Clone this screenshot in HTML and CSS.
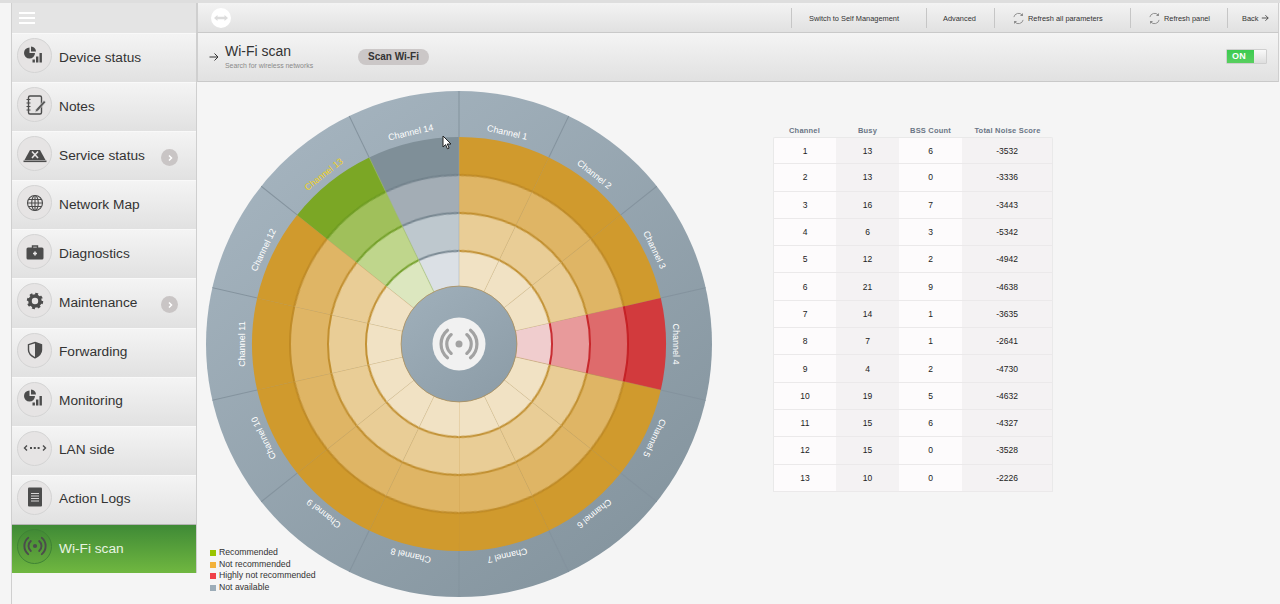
FILE: index.html
```html
<!DOCTYPE html>
<html lang="en">
<head>
<meta charset="utf-8">
<title>Wi-Fi scan</title>
<link rel="stylesheet" href="styles.css">
</head>
<body>
<svg class="defs" width="0" height="0" aria-hidden="true">
  <defs>
    <linearGradient id="slate" x1="0.15" y1="0.05" x2="0.85" y2="0.95">
      <stop offset="0" stop-color="#a5b4bf"/>
      <stop offset="1" stop-color="#84949e"/>
    </linearGradient>
    <linearGradient id="slate-hub" x1="0.15" y1="0.05" x2="0.85" y2="0.95">
      <stop offset="0" stop-color="#9eaeb9"/>
      <stop offset="1" stop-color="#8d9da8"/>
    </linearGradient>
    <symbol id="pie" viewBox="0 0 24 24">
      <path d="M6.500 3.500v5.500h5.500A5.500 5.500 0 1 1 6.500 3.500z"/>
      <path d="M8 2.500a5.400 5.400 0 0 1 5 5H8z"/>
      <rect x="9.500" y="15.500" width="2.400" height="3"/>
      <rect x="13" y="12.500" width="2.400" height="6"/>
      <rect x="16.500" y="9" width="2.400" height="9.500"/>
    </symbol>
    <symbol id="wifi" viewBox="-13 -13 26 26">
      <circle r="2.300" class="wifi-dot"/>
      <path class="wifi-arc" d="M-4.500 -5.400A7 7 0 0 0 -4.500 5.400M4.500 -5.400A7 7 0 0 1 4.500 5.400M-7.400 -8.800A11.500 11.500 0 0 0 -7.400 8.800M7.400 -8.800A11.500 11.500 0 0 1 7.400 8.800"/>
    </symbol>
    <symbol id="refresh" viewBox="0 0 14 14">
      <path class="refresh-path" d="M2 5.500A5.200 5.200 0 0 1 11 3.200M12 8.500A5.200 5.200 0 0 1 3 10.800"/>
      <path class="refresh-head" d="M11.800 1.200v3.200H8.600zM2.200 12.800V9.600h3.200z"/>
    </symbol>
    <g id="sector">
      <path class="seg s1" d="M-46.060 -201.810A207 207 0 0 1 46.060 -201.810L37.610 -164.760A169 169 0 0 0 -37.610 -164.760Z"/>
      <path class="seg s2" d="M-37.610 -164.760A169 169 0 0 1 37.610 -164.760L29.150 -127.720A131 131 0 0 0 -29.150 -127.720Z"/>
      <path class="seg s3" d="M-29.150 -127.720A131 131 0 0 1 29.150 -127.720L20.690 -90.670A93 93 0 0 0 -20.690 -90.670Z"/>
      <path class="seg s4" d="M-20.690 -90.670A93 93 0 0 1 20.690 -90.670L12.910 -56.550A58 58 0 0 0 -12.910 -56.550Z"/>
      <path class="edge" d="M-37.610 -164.760A169 169 0 0 1 37.610 -164.760M-29.150 -127.720A131 131 0 0 1 29.150 -127.720M-20.690 -90.670A93 93 0 0 1 20.690 -90.670"/>
      <path class="spoke" d="M12.910 -56.550L46.060 -201.810"/>
      <path class="tick" d="M46.060 -201.810L56.300 -246.660"/>
    </g>
  </defs>
</svg>

<div class="strip"></div>
<div class="shell">
  <div class="side-col">
    <nav class="side">
      <div class="burger"><span></span><span></span><span></span></div>
      <a class="item"><span class="disc"><svg class="ico"><use href="#pie"/></svg></span><span class="label">Device status</span></a>
      <a class="item"><span class="disc"><svg class="ico" viewBox="0 0 24 24"><rect class="line" x="5.500" y="3" width="13" height="18" rx="1.500"/><path class="line thin" d="M3.500 6.500h4M3.500 10h4M3.500 13.500h4M3.500 17h4"/><path class="pencil" d="M21 7.500l1.800 1.700-7.800 8.800-3 1.200 1-3z"/></svg></span><span class="label">Notes</span></a>
      <a class="item"><span class="disc"><svg class="ico" viewBox="0 0 24 24"><path d="M7 8h10l5.500 10h-21z"/><path class="cross" d="M9 9.500l6 6.500M15 9.500l-6 6.500"/><rect x=".5" y="18.500" width="23" height="1.600"/></svg></span><span class="label">Service status</span><span class="more"><svg viewBox="0 0 8 8" width="8" height="8"><path d="M3 1.500L5.500 4 3 6.500"/></svg></span></a>
      <a class="item"><span class="disc"><svg class="ico" viewBox="0 0 24 24"><g class="line thin"><circle cx="12" cy="12" r="7.500"/><ellipse cx="12" cy="12" rx="3.300" ry="7.500"/><path d="M12 4.500v15M4.500 12h15M5.500 8.500h13M5.500 15.500h13"/></g></svg></span><span class="label">Network Map</span></a>
      <a class="item"><span class="disc"><svg class="ico" viewBox="0 0 24 24"><path class="line" d="M9.500 8V6h5v2"/><rect x="3.500" y="7.500" width="17" height="12" rx="1.500"/><path class="cross" d="M12 11.500v4M10 13.500h4"/></svg></span><span class="label">Diagnostics</span></a>
      <a class="item"><span class="disc"><svg class="ico" viewBox="0 0 24 24"><circle class="gear-ring" cx="12" cy="12" r="5"/><circle class="gear-teeth" cx="12" cy="12" r="7"/></svg></span><span class="label">Maintenance</span><span class="more"><svg viewBox="0 0 8 8" width="8" height="8"><path d="M3 1.500L5.500 4 3 6.500"/></svg></span></a>
      <a class="item"><span class="disc"><svg class="ico" viewBox="0 0 24 24"><path class="line" d="M12 4.500l6.500 2.200v5.300c0 3.500-2.800 6-6.500 7.800-3.700-1.800-6.500-4.300-6.500-7.800V6.700z"/><path d="M12 4.500l6.500 2.200v5.300c0 3.500-2.800 6-6.500 7.800z"/></svg></span><span class="label">Forwarding</span></a>
      <a class="item"><span class="disc"><svg class="ico"><use href="#pie"/></svg></span><span class="label">Monitoring</span></a>
      <a class="item"><span class="disc"><svg class="ico" viewBox="0 0 24 24"><path class="line" d="M4 9.500L1.500 12 4 14.500M20 9.500l2.500 2.500-2.500 2.500"/><path class="dots" d="M7 12h10"/></svg></span><span class="label">LAN side</span></a>
      <a class="item"><span class="disc"><svg class="ico" viewBox="0 0 24 24"><rect x="5" y="2.500" width="14" height="19" rx="1"/><path class="cross thin" d="M8 8.500h8M8 11h8M8 13.500h8M8 16h8"/></svg></span><span class="label">Action Logs</span></a>
      <a class="item active"><span class="disc"><svg class="ico"><use href="#wifi"/></svg></span><span class="label">Wi-Fi scan</span></a>
    </nav>
  </div>

  <main class="main">
    <header class="topbar">
      <span class="logo"><svg viewBox="0 0 20 20" width="20" height="20"><circle cx="10" cy="10" r="10"/><path d="M3 10l3.500-3v1.800h7V7l3.500 3-3.500 3v-1.800h-7V13z"/></svg></span>
      <div class="actions">
        <a class="act act-self">Switch to Self Management</a>
        <a class="act act-adv">Advanced</a>
        <a class="act act-all"><svg class="refresh"><use href="#refresh"/></svg>Refresh all parameters</a>
        <a class="act act-panel"><svg class="refresh"><use href="#refresh"/></svg>Refresh panel</a>
        <a class="act act-back">Back<svg class="back-arrow" viewBox="0 0 10 10"><path d="M1 5h8M5.500 1.500L9 5 5.500 8.500"/></svg></a>
      </div>
    </header>

    <section class="head">
      <svg class="head-arrow" viewBox="0 0 10 10"><path d="M.5 5h8.500M5.500 1.500L9 5 5.500 8.500"/></svg>
      <div class="titles">
        <h1>Wi-Fi scan</h1>
        <p>Search for wireless networks</p>
      </div>
      <button class="scan" type="button">Scan Wi-Fi</button>
      <div class="toggle"><span class="on">ON</span><span class="knob"></span></div>
    </section>

    <section class="content">
      <svg class="wheel" width="506" height="506" viewBox="-253 -253 506 506">
        <circle class="band" r="253"/>
        <g class="c-orange" transform="rotate(12.857)"><use href="#sector"/><text class="ch" y="-214">Channel 1</text></g>
        <g class="c-orange" transform="rotate(38.571)"><use href="#sector"/><text class="ch" y="-214">Channel 2</text></g>
        <g class="c-orange" transform="rotate(64.286)"><use href="#sector"/><text class="ch" y="-214">Channel 3</text></g>
        <g class="c-orange" transform="rotate(115.714)"><use href="#sector"/><text class="ch" y="-214">Channel 5</text></g>
        <g class="c-orange" transform="rotate(141.429)"><use href="#sector"/><text class="ch" y="-214">Channel 6</text></g>
        <g class="c-orange" transform="rotate(167.143)"><use href="#sector"/><text class="ch" y="-214">Channel 7</text></g>
        <g class="c-orange" transform="rotate(192.857)"><use href="#sector"/><text class="ch" y="-214">Channel 8</text></g>
        <g class="c-orange" transform="rotate(218.571)"><use href="#sector"/><text class="ch" y="-214">Channel 9</text></g>
        <g class="c-orange" transform="rotate(244.286)"><use href="#sector"/><text class="ch" y="-214">Channel 10</text></g>
        <g class="c-orange" transform="rotate(270)"><use href="#sector"/><text class="ch" y="-214">Channel 11</text></g>
        <g class="c-orange" transform="rotate(295.714)"><use href="#sector"/><text class="ch" y="-214">Channel 12</text></g>
        <g class="c-grey" transform="rotate(347.143)"><use href="#sector"/><text class="ch" y="-214">Channel 14</text></g>
        <g class="c-red" transform="rotate(90)"><use href="#sector"/><text class="ch" y="-214">Channel 4</text></g>
        <g class="c-green" transform="rotate(321.429)"><use href="#sector"/><text class="ch ch-sel" y="-214">Channel 13</text></g>
        <circle class="hub" r="58"/>
        <circle class="hub-disc" r="26.500"/>
        <g class="hub-icon">
          <circle r="3.500"/>
          <path d="M-7.800 -9.400A12.200 12.200 0 0 0 -7.800 9.400M7.800 -9.400A12.200 12.200 0 0 1 7.800 9.400M-11.500 -13.800A18 18 0 0 0 -11.500 13.800M11.500 -13.800A18 18 0 0 1 11.500 13.800"/>
        </g>
      </svg>

      <ul class="legend">
        <li><i class="sw sw-green"></i>Recommended</li>
        <li><i class="sw sw-orange"></i>Not recommended</li>
        <li><i class="sw sw-red"></i>Highly not recommended</li>
        <li><i class="sw sw-grey"></i>Not available</li>
      </ul>

      <svg class="cursor" width="10" height="15" viewBox="0 0 10 15"><path d="M1 1v11l2.600-2.400 1.800 4.200 1.700-.7-1.800-4.100H9z"/></svg>

      <div class="table-wrap">
        <table>
          <thead><tr><th class="c1">Channel</th><th class="c2">Busy</th><th class="c3">BSS Count</th><th class="c4">Total Noise Score</th></tr></thead>
          <tbody>
            <tr><td>1</td><td>13</td><td>6</td><td>-3532</td></tr>
            <tr><td>2</td><td>13</td><td>0</td><td>-3336</td></tr>
            <tr><td>3</td><td>16</td><td>7</td><td>-3443</td></tr>
            <tr><td>4</td><td>6</td><td>3</td><td>-5342</td></tr>
            <tr><td>5</td><td>12</td><td>2</td><td>-4942</td></tr>
            <tr><td>6</td><td>21</td><td>9</td><td>-4638</td></tr>
            <tr><td>7</td><td>14</td><td>1</td><td>-3635</td></tr>
            <tr><td>8</td><td>7</td><td>1</td><td>-2641</td></tr>
            <tr><td>9</td><td>4</td><td>2</td><td>-4730</td></tr>
            <tr><td>10</td><td>19</td><td>5</td><td>-4632</td></tr>
            <tr><td>11</td><td>15</td><td>6</td><td>-4327</td></tr>
            <tr><td>12</td><td>15</td><td>0</td><td>-3528</td></tr>
            <tr><td>13</td><td>10</td><td>0</td><td>-2226</td></tr>
          </tbody>
        </table>
      </div>
    </section>
  </main>
</div>
</body>
</html>
```

FILE: styles.css
```css
* { box-sizing: border-box; }
html, body { margin: 0; height: 604px; overflow: hidden; }
body {
  background: #f5f5f5;
  font-family: "Liberation Sans", Arial, sans-serif;
  color: #333;
  display: flex;
  flex-direction: column;
}
.defs { position: absolute; }
.strip { height: 3px; background: #dedede; flex: none; }
.shell { display: flex; flex: 1; min-height: 0; }

/* sidebar */
.side-col { width: 197px; flex: none; padding-left: 11px; }
.side {
  border-left: 1px solid #cfcfcf;
  border-right: 1px solid #cfcfcf;
  height: 570px;
  position: relative;
}
.side::after {
  content: "";
  position: absolute;
  left: -1px;
  top: 570px;
  width: 1px;
  height: 40px;
  background: #cfcfcf;
}
.burger {
  height: 30px;
  background: #e4e4e4;
  padding: 9px 0 0 7px;
  display: flex;
  flex-direction: column;
  gap: 3px;
}
.burger span { display: block; width: 16px; height: 2px; background: #fff; }
.item {
  height: 49.100px;
  display: flex;
  align-items: center;
  background: linear-gradient(#f4f4f4, #e1e1e1);
  border-top: 1px solid #f9f9f9;
  padding-left: 5px;
  font-size: 13.700px;
  color: #333;
  position: relative;
}
.label { margin-top: -2px; }
.disc {
  width: 35px;
  height: 35px;
  border-radius: 50%;
  background: #e6e4e4;
  border: 1px solid #d4d4d4;
  display: flex;
  align-items: center;
  justify-content: center;
  flex: none;
  align-self: flex-start;
  margin: 4px 7px 0 0;
}
.ico { width: 24px; height: 24px; fill: #4c4c4c; }
.line { fill: none; stroke: #4c4c4c; stroke-width: 1.400; }
.line.thin { stroke-width: 1.100; }
.pencil { fill: #5a5a5a; stroke: #e6e4e4; stroke-width: .6; }
.cross { fill: none; stroke: #e6e4e4; stroke-width: 1.600; }
.cross.thin { stroke-width: .9; }
.dots { fill: none; stroke: #4c4c4c; stroke-width: 2; stroke-dasharray: 2 1.800; }
.gear-ring { fill: none; stroke: #4c4c4c; stroke-width: 3.600; }
.gear-teeth { fill: none; stroke: #4c4c4c; stroke-width: 2.400; stroke-dasharray: 2.800 2.700; }
.wifi-dot { fill: #4c4c4c; }
.wifi-arc { fill: none; stroke: #4c4c4c; stroke-width: 2.100; stroke-linecap: round; }
.more {
  position: absolute;
  left: 149px;
  top: 17px;
  width: 17px;
  height: 17px;
  border-radius: 50%;
  background: #c9c5c5;
  display: flex;
  align-items: center;
  justify-content: center;
}
.more path { fill: none; stroke: #fff; stroke-width: 1.500; }
.item.active {
  background: linear-gradient(#3f8a36, #70b740);
  color: #e9f4e2;
  border-top: 1px solid #b4b4b4;
}
.item.active .disc { background: rgba(0, 0, 0, .03); border-color: #3f8335; }
.item.active .wifi-dot { fill: #4a5546; }
.item.active .wifi-arc { stroke: #4a5546; }
.item.active .label { margin-top: 0; }

/* main */
.main { flex: 1; min-width: 0; display: flex; flex-direction: column; }
.topbar {
  height: 30px;
  display: flex;
  align-items: center;
  justify-content: space-between;
  background: linear-gradient(#f3f3f3, #e1e1e1);
  border-left: 1px solid #cfcfcf;
  border-right: 1px solid #cfcfcf;
  border-bottom: 1px solid #c9c9c9;
  margin-right: 1px;
  padding-left: 13px;
}
.logo { display: flex; }
.logo circle { fill: #fff; }
.logo path { fill: #dcdcdc; }
.actions { display: flex; align-items: center; height: 100%; }
.act {
  height: 20px;
  display: flex;
  align-items: center;
  font-size: 7.400px;
  color: #333;
  border-left: 1px solid #c6c6c6;
  white-space: nowrap;
  padding-top: 1px;
  margin-left: -1px;
}
.act:first-child { margin-left: 0; }
.act-self { width: 136px; padding-left: 17px; }
.act-adv { width: 69px; padding-left: 16px; }
.act-all { width: 137px; padding-left: 17px; }
.act-panel { width: 98px; padding-left: 17px; }
.act-back { width: 51px; padding-left: 14px; }
.refresh { width: 13px; height: 13px; margin-right: 3px; }
.refresh-path { fill: none; stroke: #8c8c8c; stroke-width: 1; }
.refresh-head { fill: #8c8c8c; }
.back-arrow { width: 8px; height: 8px; margin-left: 3px; }
.back-arrow path, .head-arrow path { fill: none; stroke: #333; stroke-width: 1; }

.head {
  height: 49px;
  display: flex;
  align-items: center;
  background: linear-gradient(#f4f4f4, #e1e1e1);
  border-left: 1px solid #cfcfcf;
  border-right: 1px solid #cfcfcf;
  border-bottom: 1px solid #c9c9c9;
  margin-right: 1px;
  padding-left: 11px;
}
.head-arrow { width: 10px; height: 10px; flex: none; margin: 0 6px 0 0; }
.titles { width: 133px; flex: none; margin-top: -2px; }
h1 { margin: 0; font-size: 14px; font-weight: 400; line-height: 16px; color: #333; }
.titles p { margin: 2px 0 0; font-size: 6.900px; line-height: 9px; color: #8a8a8a; white-space: nowrap; }
.scan {
  width: 71px;
  height: 16px;
  border: 0;
  padding: 0;
  border-radius: 8px;
  background: #cbc7c7;
  font: 700 10px "Liberation Sans", Arial, sans-serif;
  color: #333;
  margin-top: -1px;
}
.toggle {
  margin-left: auto;
  margin-right: 11px;
  width: 41px;
  height: 15px;
  display: flex;
  border: 1px solid #cfcfcf;
  border-radius: 1px;
  margin-top: -2px;
}
.toggle .on {
  width: 27px;
  background: linear-gradient(#3ccb50, #58cf5f);
  color: #fff;
  font-size: 9px;
  font-weight: 700;
  line-height: 13px;
  padding-left: 5px;
  letter-spacing: .3px;
}
.toggle .knob { flex: 1; background: linear-gradient(#f9f9f9, #dedede); }

.content {
  flex: 1;
  min-height: 0;
  position: relative;
  display: flex;
  align-items: flex-start;
  padding: 9px 0 0 9px;
  background: #f5f5f5;
}
.wheel { flex: none; display: block; }
.band { fill: url(#slate); }
.hub { fill: url(#slate-hub); stroke: #b9893a; stroke-width: .6; }
.hub-disc { fill: #f1f1f1; }
.hub-icon circle { fill: #a2a2a2; }
.hub-icon path { fill: none; stroke: #a2a2a2; stroke-width: 3.200; stroke-linecap: round; }
.s1 { fill: var(--c1); }
.s2 { fill: var(--c2); }
.s3 { fill: var(--c3); }
.s4 { fill: var(--c4); }
.edge { fill: none; stroke: var(--edge); stroke-width: 2; opacity: .85; filter: blur(.6px); }
.spoke { fill: none; stroke: var(--spoke); stroke-width: 1; }
.tick { fill: none; stroke: #84939e; stroke-width: 1; }
.c-orange { --c1: #d09a2d; --c2: #dfb565; --c3: #e9cd96; --c4: #f1e2c4; --edge: #bd8721; --spoke: rgba(196, 148, 60, .4); }
.c-red { --c1: #d23a3d; --c2: #de6b6c; --c3: #e89a9b; --c4: #f0cdce; --edge: #c4181d; --spoke: rgba(196, 148, 60, .4); }
.c-green { --c1: #7ba725; --c2: #a0c05b; --c3: #bfd68c; --c4: #dce7bf; --edge: #6b9a1d; --spoke: rgba(160, 190, 100, .5); }
.c-grey { --c1: #7f8f98; --c2: #a3adb5; --c3: #bec8ce; --c4: #dbe0e5; --edge: #6f7f89; --spoke: rgba(150, 165, 175, .4); }
.ch {
  font: 9px "Liberation Sans", Arial, sans-serif;
  fill: #fff;
  text-anchor: middle;
}
.ch-sel { fill: #f0d21e; }

.legend {
  position: absolute;
  left: 13px;
  top: 465px;
  margin: 0;
  padding: 0;
  list-style: none;
  font-size: 8.700px;
  line-height: 11.700px;
  color: #333;
}
.legend li { display: flex; align-items: center; }
.sw { width: 6px; height: 6px; margin-right: 3px; }
.sw-green { background: #9ac400; }
.sw-orange { background: #f3b23b; }
.sw-red { background: #f04048; }
.sw-grey { background: #9cacb8; }

.cursor { position: absolute; left: 245px; top: 53px; }
.cursor path { fill: #fff; stroke: #222; stroke-width: 1; }

.table-wrap { margin: 32px 0 0 61px; flex: none; }
table {
  width: 280px;
  border-collapse: separate;
  border-spacing: 0;
  table-layout: fixed;
  font-size: 8.500px;
  color: #222;
}
th {
  font-size: 7.500px;
  font-weight: 700;
  color: #6a7585;
  height: 14px;
  padding: 0;
  text-align: center;
  letter-spacing: .2px;
}
th.c1, th.c2, th.c3 { width: 63px; }
th.c4 { width: 91px; }
td {
  height: 27.300px;
  padding: 0;
  text-align: center;
  background: #fdfbfc;
  border-bottom: 1px solid #ebe9ea;
}
td:nth-child(even) { background: #f4f2f3; }
td:first-child { border-left: 1px solid #e9e9e9; }
td:last-child { border-right: 1px solid #e9e9e9; }
tbody tr:first-child td { border-top: 1px solid #e9e9e9; }
tbody tr:nth-child(1) td:first-child { border-top-left-radius: 2px; }
tbody tr:nth-child(1) td:last-child { border-top-right-radius: 2px; }
```
